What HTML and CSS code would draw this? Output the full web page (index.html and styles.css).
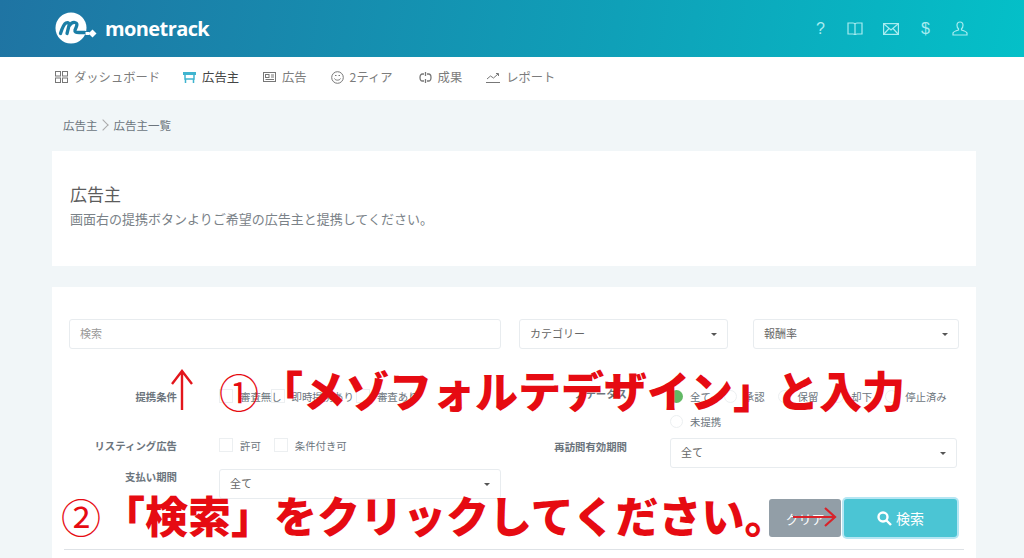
FILE: index.html
```html
<!DOCTYPE html>
<html>
<head>
    <title>monetrack</title>
    <link rel="stylesheet" href="styles.css">
</head>
<body>
    <header class="topbar">
        <div class="logo">
            <svg class="logo-mark" width="44" height="33" viewBox="0 0 44 33">
                <circle cx="16" cy="16" r="15.500" fill="#fff"/>
                <path d="M5.500 21.500C7.500 15 9 12 11 11c2.500-1 3.500 .5 3 2.500L12 21.500M14 14c2-3 4-4 6-3.500 2.500 .5 2 2.500 1.500 4l-1.500 3.500c-.5 2 1 2.500 4 2.500H30" fill="none" stroke="#1b7ea6" stroke-width="3.300" stroke-linecap="round"/>
                <path d="M30.500 21.500h4" fill="none" stroke="#fff" stroke-width="3"/>
                <path d="M37.500 17.500l4 4-4 4-4-4z" fill="#fff"/>
            </svg>
            <span class="logo-text">monetrack</span>
        </div>
        <div class="top-icons">
            <span class="top-q">?</span>
            <svg width="16" height="14" viewBox="0 0 16 14" fill="none" stroke="#a8ecf0" stroke-width="1.200"><path d="M1 1h5c1 0 2 .6 2 1.600V13c0-.6-1-1-2-1H1zM15 1h-5c-1 0-2 .6-2 1.600V13c0-.6 1-1 2-1h5z"/></svg>
            <svg width="16" height="12" viewBox="0 0 16 12" fill="none" stroke="#a8ecf0" stroke-width="1.200"><rect x=".6" y=".6" width="14.800" height="10.800"/><path d="M1 1l7 6 7-6M1 11l5-5.500M15 11l-5-5.500"/></svg>
            <span class="top-q">$</span>
            <svg width="16" height="15" viewBox="0 0 16 15" fill="none" stroke="#a8ecf0" stroke-width="1.200"><path d="M8 1c2 0 3 1.400 3 3.200 0 1.600-.8 3-1.500 3.600v1.200c2 .6 5 1.500 5.500 3V14H1v-2c.5-1.500 3.500-2.400 5.500-3V7.800C5.800 7.200 5 5.800 5 4.200 5 2.400 6 1 8 1z"/></svg>
        </div>
    </header>

    <nav class="menu">
        <a class="menu-item">
            <svg width="13" height="12" viewBox="0 0 13 12" fill="none" stroke="#777" stroke-width="1"><rect x=".5" y=".5" width="5" height="4.500"/><rect x="7.500" y=".5" width="5" height="4.500"/><rect x=".5" y="7" width="5" height="4.500"/><rect x="7.500" y="7" width="5" height="4.500"/></svg>
            ダッシュボード
        </a>
        <a class="menu-item active">
            <svg width="13" height="11" viewBox="0 0 13 11" fill="none" stroke="#3fb4cf"><path d="M0 1.500h13" stroke-width="3"/><path d="M2 3v4h9V3" stroke-width="1.500"/><path d="M2.500 7v4M10.500 7v4" stroke-width="1.500"/></svg>
            広告主
        </a>
        <a class="menu-item">
            <svg width="13" height="10" viewBox="0 0 13 10" fill="none" stroke="#777" stroke-width="1"><rect x=".5" y=".5" width="12" height="9"/><rect x="2.500" y="2.500" width="3.500" height="3"/><path d="M8 3h3M8 5h3M2.500 7.500h8.500"/></svg>
            広告
        </a>
        <a class="menu-item">
            <svg width="13" height="13" viewBox="0 0 13 13" fill="none" stroke="#777" stroke-width="1"><circle cx="6.500" cy="6.500" r="5.800"/><path d="M3.500 7.500c.8 2.200 5.200 2.200 6 0M4 4.500h1.500M7.500 4.500H9"/></svg>
            2ティア
        </a>
        <a class="menu-item">
            <svg width="13" height="11" viewBox="0 0 13 11" fill="none" stroke="#777" stroke-width="1.300"><path d="M5 2H3.500C2 2 1 3.200 1 5.500S2 9 3.500 9H5M8 2h1.500C11 2 12 3.200 12 5.500S11 9 9.500 9H8M6.500 0v4M6.500 7v4"/></svg>
            成果
        </a>
        <a class="menu-item">
            <svg width="14" height="11" viewBox="0 0 14 11" fill="none" stroke="#777" stroke-width="1"><path d="M0 10.500h14M1 7l3.500-3 3 2 4.500-4M10 1.500h2.500V4"/></svg>
            レポート
        </a>
    </nav>

    <div class="crumbs">広告主<span class="crumb-sep"></span>広告主一覧</div>

    <section class="card intro">
        <h1>広告主</h1>
        <p>画面右の提携ボタンよりご希望の広告主と提携してください。</p>
    </section>

    <section class="card search">
        <div class="search-top">
            <div class="field search-input">検索</div>
            <div class="field select cat">カテゴリー</div>
            <div class="field select rate">報酬率</div>
        </div>

        <div class="filters">
            <div class="filters-col left">
                <div class="row row-terms">
                    <label class="row-label">提携条件</label>
                    <div class="checks">
                        <span class="check"><i class="box"></i>審査無し</span>
                        <span class="check"><i class="box"></i>即時提携あり</span>
                        <span class="check"><i class="box"></i>審査あり</span>
                    </div>
                </div>
                <div class="row row-listing">
                    <label class="row-label">リスティング広告</label>
                    <div class="checks">
                        <span class="check"><i class="box"></i>許可</span>
                        <span class="check"><i class="box"></i>条件付き可</span>
                    </div>
                </div>
                <div class="row row-pay">
                    <label class="row-label">支払い期間</label>
                    <div class="field select pay">全て</div>
                </div>
            </div>
            <div class="filters-col right">
                <div class="row row-status">
                    <label class="row-label">ステータス</label>
                    <div class="radios">
                        <span class="radio"><i class="dot on"></i>全て</span>
                        <span class="radio"><i class="dot"></i>承認</span>
                        <span class="radio"><i class="dot"></i>保留</span>
                        <span class="radio"><i class="dot"></i>却下</span>
                        <span class="radio"><i class="dot"></i>停止済み</span>
                        <span class="radio"><i class="dot"></i>未提携</span>
                    </div>
                </div>
                <div class="row row-revisit">
                    <label class="row-label">再訪問有効期間</label>
                    <div class="field select revisit">全て</div>
                </div>
                <div class="buttons">
                    <button class="btn clear">クリア</button>
                    <button class="btn go">
                        <svg width="15" height="15" viewBox="0 0 15 15" fill="none" stroke="#fff" stroke-width="2.400"><circle cx="6" cy="6" r="4.500"/><path d="M9.500 9.500L14 14"/></svg>
                        検索
                    </button>
                </div>
            </div>
        </div>
        <hr class="rule">
    </section>

    <!-- red notes drawn over the screenshot -->
    <div class="note note-one"><span class="num">①</span>「メゾフォルテデザイン」と入力</div>
    <div class="note note-two"><span class="num">②</span>「検索」をクリックしてください。</div>
    <svg class="arrow arrow-up" width="24" height="42" viewBox="0 0 24 42" fill="none" stroke="#e3161c" stroke-width="2.400"><path d="M12 41V2M2 15L12 2l10 13"/></svg>
    <svg class="arrow arrow-right" width="44" height="20" viewBox="0 0 44 20" fill="none" stroke="#d8232a" stroke-width="2.200"><path d="M0 10h42M32 1l10 9-10 9"/></svg>
</body>
</html>
```

FILE: styles.css
```css
* {
    box-sizing: border-box;
}
html, body {
    height: 558px;
    overflow: hidden;
}
body {
    margin: 0;
    background-color: #f1f6f8;
    font-family: "Noto Sans CJK JP", "Noto Sans", sans-serif;
    font-size: 12px;
    color: #6c757d;
}
.topbar {
    height: 57px;
    padding: 0 56px 0 55px;
    display: flex;
    justify-content: space-between;
    align-items: center;
    background: linear-gradient(100deg, #1f74a3 0%, #0fa0b8 60%, #04c0c8 100%);
}
.logo {
    display: flex;
    align-items: center;
    gap: 6px;
}
.logo-mark {
    margin-top: -1px;
}
.logo-text {
    font-family: "Open Sans", sans-serif;
    font-size: 20px;
    font-weight: 700;
    letter-spacing: -.6px;
    color: #fff;
}
.top-icons {
    display: flex;
    align-items: center;
    gap: 20px;
}
.top-q {
    width: 13px;
    text-align: center;
    font-family: "Liberation Sans", sans-serif;
    font-size: 16px;
    color: #a8ecf0;
}
.menu {
    height: 43px;
    padding: 0 0 3px 55px;
    display: flex;
    align-items: center;
    gap: 24px;
    background-color: #fff;
}
.menu-item {
    display: flex;
    align-items: center;
    gap: 6px;
    font-size: 12.300px;
    color: #7c7c7c;
}
.menu-item.active {
    margin-left: -1px;
    color: #444;
}
.menu-item:nth-child(5) {
    margin-left: 2px;
}
.crumbs {
    height: 51px;
    padding: 17px 0 0 63px;
    font-size: 11.500px;
    line-height: 16px;
    color: #6c757d;
}
.crumb-sep {
    display: inline-block;
    width: 8px;
    height: 8px;
    margin: 0 7px 1px 1px;
    border-top: 1px solid #aaa;
    border-right: 1px solid #aaa;
    transform: rotate(45deg);
}
.card {
    margin: 0 48px 21px 52px;
    background-color: #fff;
}
.intro {
    height: 115px;
    padding: 33px 18px 0;
}
.intro h1 {
    margin: 0;
    font-size: 17px;
    font-weight: 400;
    line-height: 20px;
    color: #5c5c5c;
}
.intro p {
    margin: 5px 0 0;
    font-size: 13px;
    line-height: 20px;
    color: #7a8288;
}
.search {
    height: 271px;
    margin-bottom: 0;
    padding: 32px 17px 0;
}
.search-top {
    display: flex;
}
.field {
    height: 30px;
    padding: 0 10px;
    line-height: 27px;
    font-size: 11px;
    background-color: #fff;
    border: 1px solid #e8ecef;
    border-radius: 3px;
    color: #666;
}
.search-input {
    width: 432px;
    margin-right: 18px;
    color: #999;
}
.cat {
    width: 209px;
    margin-right: 25px;
}
.rate {
    width: 206px;
}
.select {
    position: relative;
}
.select::after {
    content: "";
    position: absolute;
    right: 10px;
    top: 13px;
    border: 3.500px solid transparent;
    border-top: 3.500px solid #555;
    border-bottom: 0;
}
.filters {
    display: flex;
    margin-top: 37px;
}
.filters-col.left {
    width: 432px;
    margin-right: 18px;
}
.filters-col.right {
    width: 440px;
}
.row {
    display: flex;
}
.row-label {
    flex: none;
    width: 108px;
    margin-right: 42px;
    font-size: 10.400px;
    font-weight: 700;
    text-align: right;
    white-space: nowrap;
    color: #6c757d;
}
.right .row-label {
    margin-right: 43px;
}
.checks, .radios {
    display: flex;
    font-size: 10.400px;
}
.check {
    display: flex;
    align-items: center;
    gap: 7px;
    margin-right: 13px;
    white-space: nowrap;
}
.row-terms .check:first-child {
    margin-right: -11px;
}
.row-terms .check:nth-child(2) {
    margin-right: 2px;
}
.box {
    width: 14px;
    height: 14px;
    border: 1px solid #eceff1;
}
.row-terms {
    height: 20px;
    align-items: center;
}
.row-listing {
    margin-top: 29px;
    height: 20px;
    align-items: center;
}
.row-pay {
    margin-top: 14px;
}
.row-pay .row-label {
    line-height: 15px;
}
.pay {
    width: 282px;
}
.row-status {
    height: 52px;
}
.radios {
    flex: none;
    flex-wrap: wrap;
    width: 295px;
    padding-top: 2px;
    row-gap: 9px;
    align-content: flex-start;
}
.radio {
    display: flex;
    align-items: center;
    gap: 7px;
    height: 16px;
    margin-right: 13px;
    white-space: nowrap;
}
.dot {
    width: 13px;
    height: 13px;
    border: 1px solid #eceff1;
    border-radius: 50%;
}
.dot.on {
    border: 0;
    background-color: #62b965;
}
.row-revisit .row-label {
    padding-top: 1px;
    line-height: 16px;
}
.revisit {
    width: 287px;
}
.buttons {
    display: flex;
    justify-content: flex-end;
    gap: 3px;
    margin: 31px 2px 0 0;
}
.btn {
    height: 38px;
    border: 0;
    border-radius: 3px;
    font-family: inherit;
    font-size: 13px;
    color: #fff;
}
.clear {
    width: 72px;
    background-color: #929ea7;
}
.go {
    width: 113px;
    display: flex;
    align-items: center;
    justify-content: center;
    gap: 4px;
    font-size: 14px;
    background-color: #4bc5d4;
    box-shadow: 0 0 0 2px #b5e6f3;
}
.rule {
    margin: 12px -5px 0;
    border: 0;
    border-top: 1px solid #dee2e6;
}
.note {
    position: absolute;
    white-space: nowrap;
    font-size: 43px;
    font-weight: 900;
    color: #e60b12;
}
.note .num {
    margin-right: 1px;
    font-size: 40px;
    font-weight: 400;
}
.note-one {
    left: 219px;
    top: 359px;
    line-height: 60px;
}
.note-two {
    left: 61px;
    top: 485px;
    line-height: 58px;
}
.arrow {
    position: absolute;
}
.arrow-up {
    left: 170px;
    top: 369px;
}
.arrow-right {
    left: 793px;
    top: 507px;
}
```
